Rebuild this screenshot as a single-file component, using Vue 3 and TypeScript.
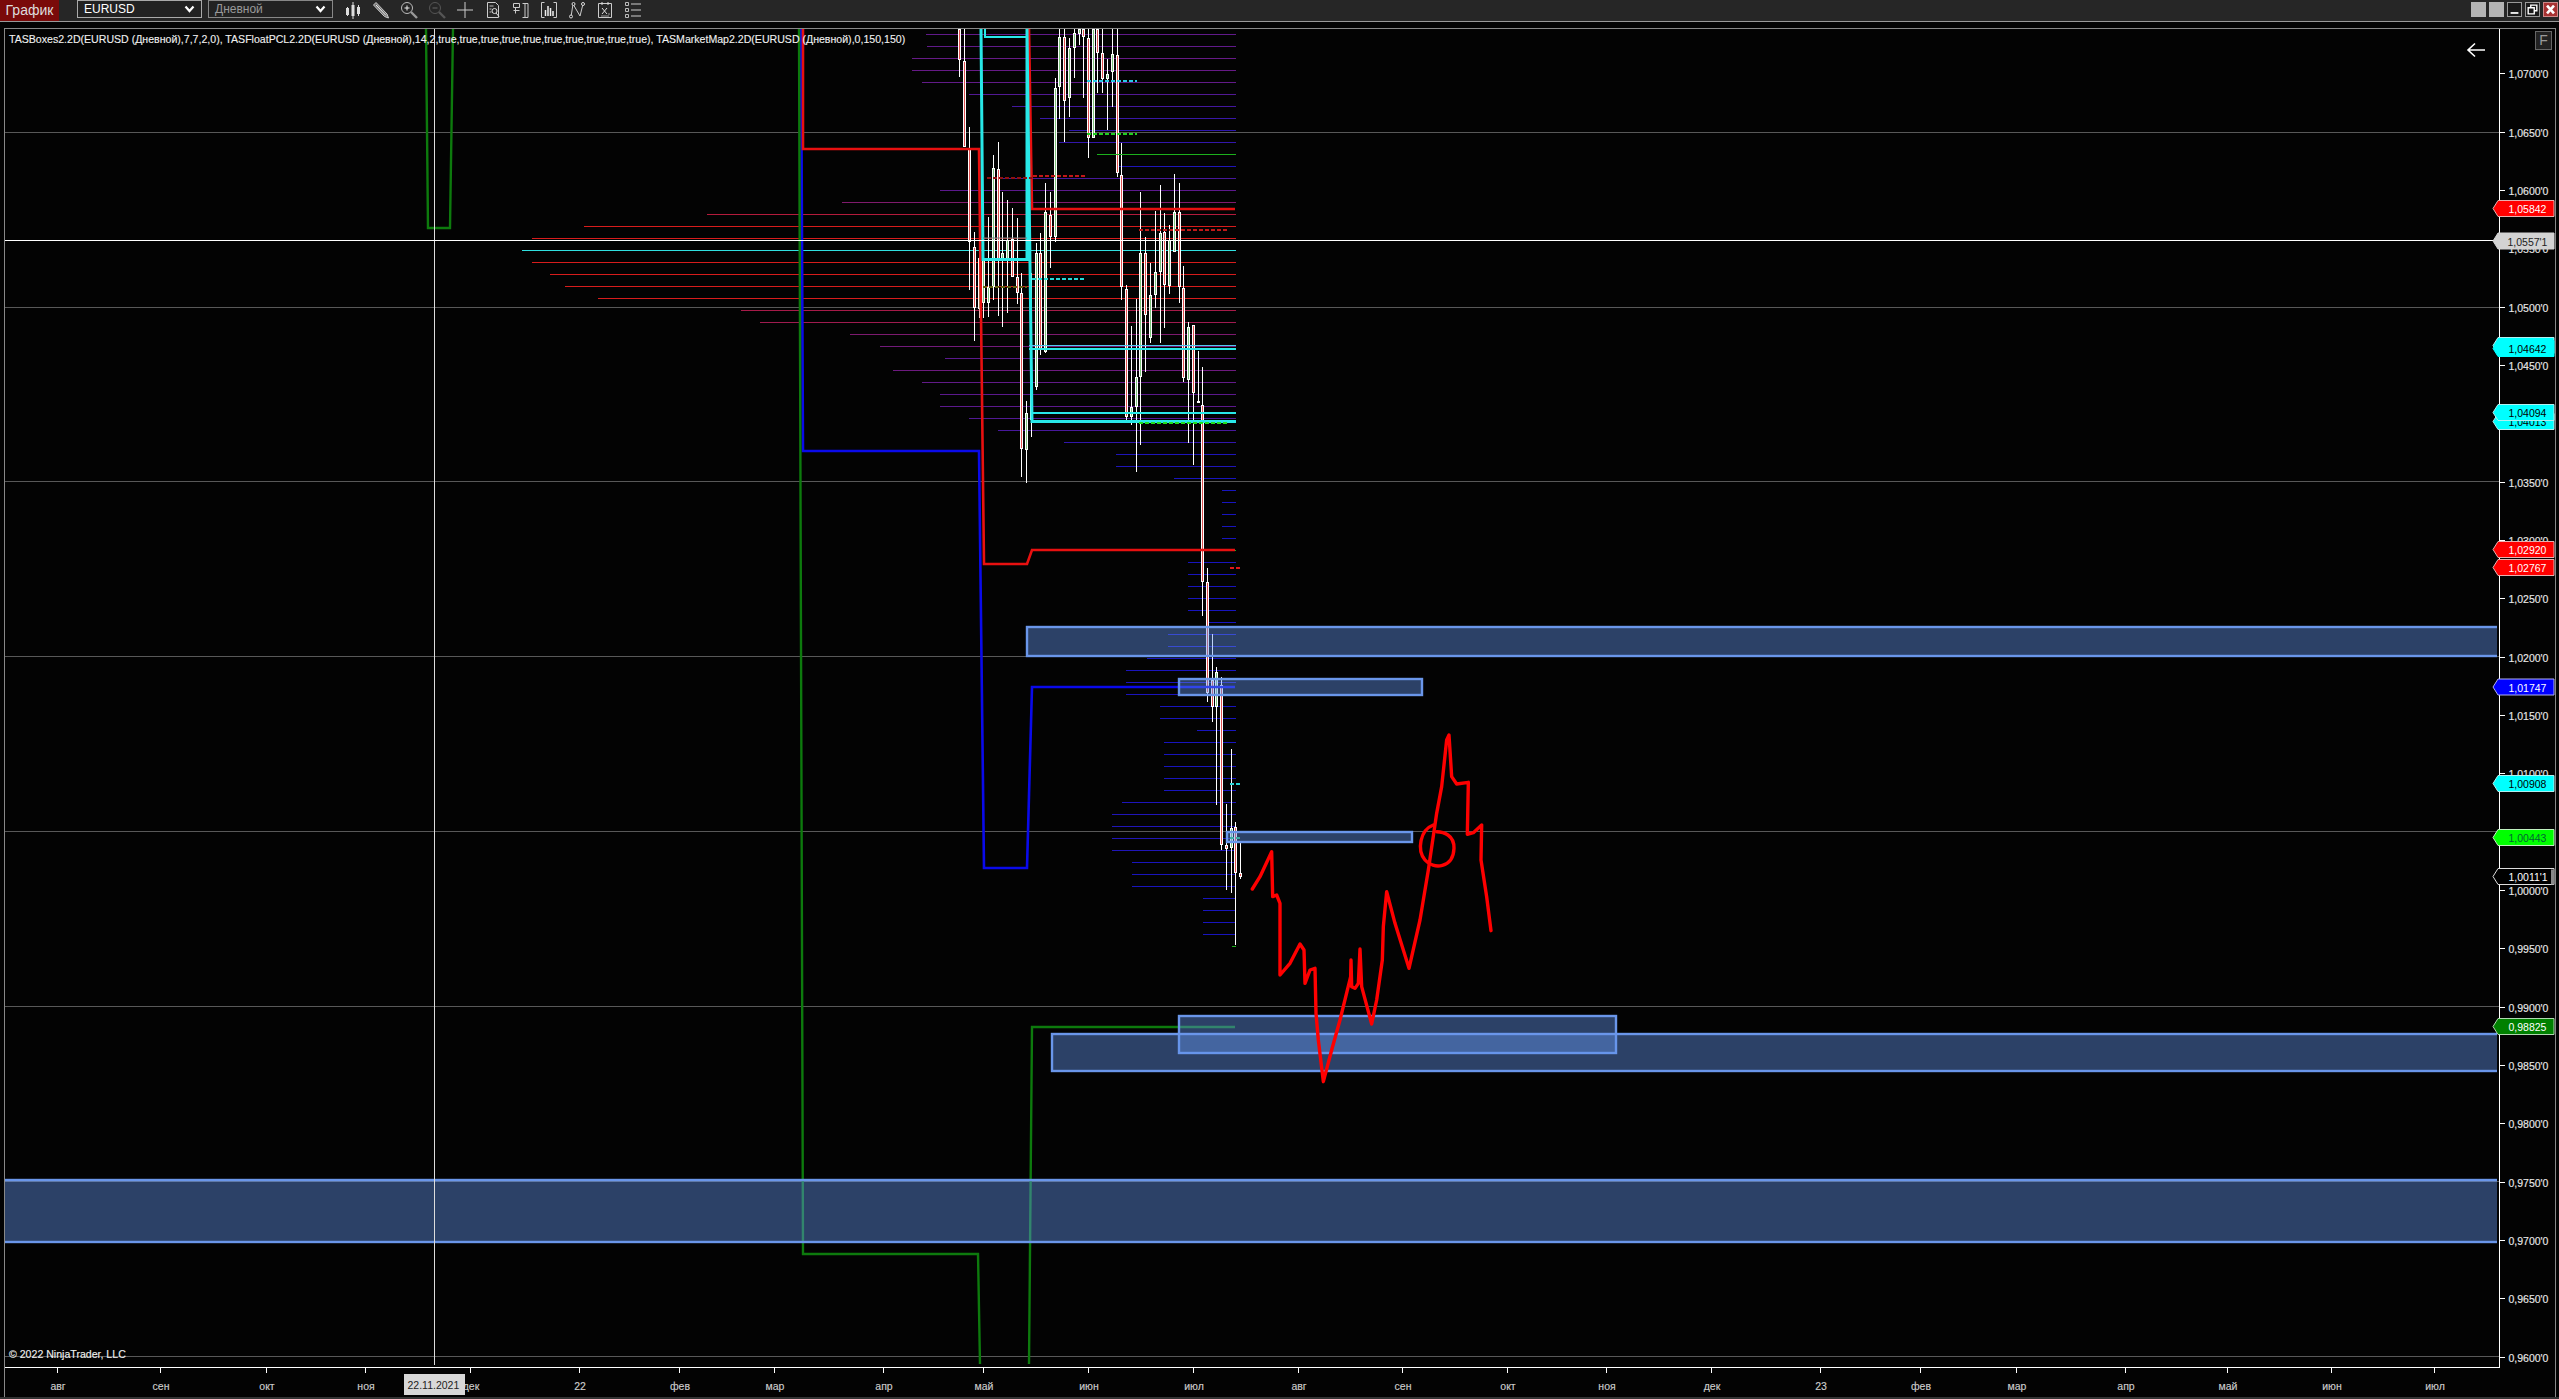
<template>
  <div class="app">
    <header class="toolbar">
      <div class="tab">График</div>
      <div class="select">
        <span>EURUSD</span>
        <svg width="11" height="8" viewBox="0 0 11 8"><path d="M1.5 1.5 5.5 6 9.5 1.5" fill="none" stroke="#fff" stroke-width="2.2" /></svg>
      </div>
      <div class="select select--dim">
        <span>Дневной</span>
        <svg width="11" height="8" viewBox="0 0 11 8"><path d="M1.5 1.5 5.5 6 9.5 1.5" fill="none" stroke="#fff" stroke-width="2.2" /></svg>
      </div>
      <div class="tools">
        <svg class="tool" viewBox="0 0 18 18"><path d="M3.5 6v9M9 1v17M14.5 4v11" stroke="#ddd" fill="none" /><rect x="2" y="7" width="3" height="7" fill="#ddd" /><rect x="7.5" y="4" width="3" height="11" fill="#ddd" /><rect x="13" y="6" width="3" height="7" fill="#ddd" /></svg>
        <svg class="tool" viewBox="0 0 18 18"><path d="M1.5 4 4 1.5 15 13l1.5 4-4-1.5z" fill="#777" stroke="#ccc" /><path d="M4 4 14 14.5" stroke="#eee" /></svg>
        <svg class="tool" viewBox="0 0 18 18"><circle cx="7" cy="7" r="5.5" fill="none" stroke="#bbb" /><path d="M4.5 7h5M7 4.5v5" stroke="#eee" /><path d="M11 11l6 6" stroke="#999" stroke-width="2.4" /></svg>
        <svg class="tool" viewBox="0 0 18 18"><circle cx="7" cy="7" r="5.5" fill="none" stroke="#555" /><path d="M4.5 7h5" stroke="#666" /><path d="M11 11l6 6" stroke="#555" stroke-width="2.4" /></svg>
        <svg class="tool" viewBox="0 0 18 18"><path d="M9 1v16M1 9h16" stroke="#ccc" /></svg>
        <svg class="tool" viewBox="0 0 18 18"><path d="M3.5 1.5h8l3 3v12h-11z" fill="none" stroke="#ccc" /><path d="M5.5 5h4M5.5 8h2M5.5 11h2" stroke="#bbb" /><circle cx="10.5" cy="10" r="2.5" fill="#222" stroke="#ddd" /><path d="M12 12l3 3.5" stroke="#ddd" /></svg>
        <svg class="tool" viewBox="0 0 18 18"><path d="M1.5 2.5h6v4h-6zM1.5 9.5h6M3.5 6.5v6M10.5 2.5H16v14h-5.5M13 2.5v14" fill="none" stroke="#ccc" /></svg>
        <svg class="tool" viewBox="0 0 18 18"><path d="M4.5 1.5h-3v15h3M13.5 1.5h3v15h-3" fill="none" stroke="#ccc" /><path d="M5.5 9v6M8 5v10M10.5 7v8M13 10v5" stroke="#eee" stroke-width="1.5" /></svg>
        <svg class="tool" viewBox="0 0 18 18"><path d="M3 16 5 3l7 12 3-12" fill="none" stroke="#ccc" /><circle cx="3" cy="15.5" r="1.5" fill="#222" stroke="#ddd" /><circle cx="5.5" cy="3" r="1.5" fill="#222" stroke="#ddd" /><circle cx="15" cy="3" r="1.5" fill="#222" stroke="#ddd" /></svg>
        <svg class="tool" viewBox="0 0 18 18"><path d="M2.5 2.5h13v14h-13z" fill="none" stroke="#ccc" /><path d="M6 1v3M12 1v3M6 7l5 6M11 7l-5 6" stroke="#ddd" /><path d="M12 13h2M5 15h8" stroke="#999" /></svg>
        <svg class="tool" viewBox="0 0 18 18"><path d="M1.5 1.5h3v3h-3zM1.5 7.5h3v3h-3zM1.5 13.5h3v3h-3z" fill="none" stroke="#bbb" /><path d="M7 3h10M7 9h10M7 15h10" stroke="#ccc" /></svg>
      </div>
      <div class="window-controls">
        <span class="win win--blank"></span>
        <span class="win win--blank"></span>
        <span class="win"><svg viewBox="0 0 15 15"><path d="M3 11.5h9" stroke="#fff" stroke-width="2" /></svg></span>
        <span class="win"><svg viewBox="0 0 15 15"><path d="M5.5 5V2.5h7V9H10M2.5 5.5h7v7h-7z" fill="none" stroke="#fff" stroke-width="1.6" /></svg></span>
        <span class="win win--close"><svg viewBox="0 0 15 15"><path d="M3.5 3 11.5 12M11.5 3 3.5 12" stroke="#fff" stroke-width="3" /></svg></span>
      </div>
    </header>

    <main class="frame">
      <svg class="chart" viewBox="5 29 2550 1368" width="2550" height="1368">
        <defs>
          <clipPath id="plot-clip"><rect x="5" y="29" width="2492" height="1338" /></clipPath>
        </defs>

        <!-- сетка -->
        <g class="crisp">
          <rect v-for="y in gridY" :key="y" x="5" :y="y" width="2494" height="1" fill="#585858" />
        </g>

        <!-- профиль объёма -->
        <g class="crisp">
          <rect
            v-for="row in profile"
            :key="row.y"
            :x="row.x"
            :y="row.y"
            :width="1236 - row.x"
            height="1"
            :fill="row.color"
          />
        </g>

        <!-- свечи -->
        <g class="crisp" clip-path="url(#plot-clip)">
          <g v-for="c in candles" :key="c.x">
            <rect :x="c.x" :y="c.wickTop" width="1" :height="c.wickBottom - c.wickTop" fill="#fff" />
            <rect :x="c.x - 1" :y="c.bodyTop" width="3" :height="Math.max(c.bodyBottom - c.bodyTop, 2)" fill="#fff" />
            <rect :x="c.x" :y="c.bodyTop + 1" width="1" :height="Math.max(c.bodyBottom - c.bodyTop - 2, 0)" :fill="c.up ? '#7fc47f' : '#e05050'" />
          </g>
        </g>

        <!-- уровни -->
        <g fill="none" stroke-linejoin="miter">
          <polyline v-for="(l, i) in levels" :key="i" :points="l.points" :stroke="l.color" :stroke-width="l.width" />
          <path
            v-for="(d, i) in dashes"
            :key="'d' + i"
            :d="`M${d.x1} ${d.y}H${d.x2}`"
            :stroke="d.color"
            stroke-width="2"
            stroke-dasharray="4 2"
          />
        </g>

        <!-- зоны -->
        <g clip-path="url(#plot-clip)">
          <rect
            v-for="(b, i) in boxes"
            :key="i"
            :x="b.x + 1"
            :y="b.y + 1"
            :width="b.w - 2"
            :height="b.h - 2"
            fill="rgba(100,149,237,0.43)"
            stroke="#6a96ea"
            stroke-width="2.4"
          />
        </g>

        <!-- перекрестие -->
        <g class="crisp">
          <rect x="434" y="29" width="1" height="1336" fill="#ddd" />
          <rect x="5" y="240" width="2494" height="1" fill="#fff" />
        </g>

        <!-- рисунок от руки -->
        <g fill="none" stroke="#f00" stroke-width="3.4" stroke-linejoin="round" stroke-linecap="round">
          <polyline :points="penLine" />
          <path d="M1433.3 825C1420 830 1416.7 850 1425 860C1433.3 870 1453.3 868.3 1454 848.3C1454.3 835 1443.3 831.7 1436.7 831.7" />
        </g>

        <!-- ось цены -->
        <g class="crisp">
          <rect x="2499" y="29" width="1" height="1339" fill="#fff" />
          <rect x="5" y="1367" width="2495" height="1" fill="#fff" />
          <rect v-for="t in priceTicks" :key="t.label" x="2499" :y="t.y" width="6" height="1" fill="#fff" />
          <rect v-for="t in timeTicks" :key="t.x" :x="t.x" y="1367" width="1" height="6" fill="#fff" />
        </g>
        <text v-for="t in priceTicks" :key="'p' + t.label" class="axis-text" x="2508.5" :y="t.y + 5">{{ t.label }}</text>
        <text v-for="t in timeTicks" :key="'t' + t.x" class="axis-text axis-text--time" :x="t.x + 1" y="1390">{{ t.label }}</text>

        <!-- метки цены -->
        <g v-for="f in flags" :key="f.label">
          <polygon :points="flagPoints(f.cy)" :fill="f.fill" :stroke="f.edge" stroke-width="1" />
          <rect v-if="f.bar" x="2551" :y="f.cy - 7" width="3" height="15" fill="#888" />
          <text class="flag-text" :x="f.x" :y="f.cy + 4.5" :fill="f.text">{{ f.label }}</text>
        </g>

        <!-- дата под перекрестием -->
        <rect x="404" y="1374" width="61" height="21" fill="#d8d8d8" />
        <text class="flag-text" x="407.5" y="1389" fill="#222">22.11.2021</text>

        <text class="legend" x="9" y="43">TASBoxes2.2D(EURUSD (Дневной),7,7,2,0), TASFloatPCL2.2D(EURUSD (Дневной),14,2,true,true,true,true,true,true,true,true,true,true), TASMarketMap2.2D(EURUSD (Дневной),0,150,150)</text>
        <text class="legend" x="9" y="1358">© 2022 NinjaTrader, LLC</text>

        <path d="M2485 50h-17M2475 43.5 2468 50l7 6.5" fill="none" stroke="#fff" stroke-width="1.6" />
      </svg>
      <div class="f-button">F</div>
    </main>
    <footer class="status"></footer>
  </div>
</template>

<script setup lang="ts">
interface Flag {
  label: string
  cy: number
  x: number
  fill: string
  text: string
  edge: string
  bar?: boolean
}

const gridY = [132, 307, 481, 656, 831, 1006, 1181, 1356]

// цена -> y
const priceY = (p: number) => Math.round(481.7 + ((1.035 - p) / 0.005) * 58.33)

const priceTicks = Array.from({ length: 23 }, (_, i) => {
  const p = 1.07 - i * 0.005
  return { y: priceY(p), label: p.toFixed(4).replace('.', ',') + "'0" }
})

const timeTicks = [
  [57, 'авг'], [160, 'сен'], [266, 'окт'], [365, 'ноя'], [470, 'дек'], [579, '22'],
  [679, 'фев'], [774, 'мар'], [883, 'апр'], [983, 'май'], [1088, 'июн'], [1193, 'июл'],
  [1298, 'авг'], [1402, 'сен'], [1507, 'окт'], [1606, 'ноя'], [1711, 'дек'], [1820, '23'],
  [1920, 'фев'], [2016, 'мар'], [2125, 'апр'], [2227, 'май'], [2331, 'июн'], [2434, 'июл']
].map(([x, label]) => ({ x: x as number, label: label as string }))

// начало каждой строки профиля, шаг 12px
const profileStarts = [
  926, 927, 912, 912, 922, 969, 1012, 1040, 1069, 1059, 1097, 1117, 1000, 940, 842, 707, 584, 532, 522,
  532, 550, 565, 598, 741, 760, 850, 880, 945, 893, 922, 940, 940, 969, 998, 1064, 1116, 1116, 1174,
  1222, 1222, 1222, 1222, 1222, 1222, 1188, 1188, 1188, 1188, 1188, 1208, 1168, 1168, 1147, 1126, 1126,
  1126, 1160, 1160, 1197, 1164, 1164, 1164, 1164, 1164, 1122, 1112, 1112, 1112, 1112, 1132, 1132, 1132,
  1203, 1203, 1203, 1203, 1232
]

const mix = (a: number[], b: number[], t: number) =>
  `rgb(${a.map((v, i) => Math.round(v + (b[i] - v) * t)).join(',')})`

const rowColor = (len: number) => {
  const blue = [24, 20, 190]
  const purple = [100, 26, 135]
  const red = [215, 28, 28]
  if (len < 100) return mix(blue, blue, 0)
  if (len < 320) return mix(blue, purple, (len - 100) / 220)
  return mix(purple, red, Math.min((len - 320) / 300, 1))
}

const profile = profileStarts.map((x, k) => {
  let color = rowColor(1236 - x)
  if (k === 18) color = '#30e0e0'
  if (k === 10 || k === 43 || k === 76) color = '#1cb01c'
  return { x, y: 34 + 12 * k, color }
})

// [x, верх тени, низ тени, верх тела, низ тела, рост] в координатах кропа
const upperCandles: [number, number, number, number, number, boolean][] = [
  [178, 26, 172, 26, 120, false], [193, 26, 380, 124, 380, false], [208, 322, 810, 385, 665, false],
  [222, 637, 962, 680, 865, false], [236, 537, 893, 715, 868, true], [250, 650, 895, 715, 848, true],
  [265, 590, 890, 800, 848, true], [280, 405, 840, 445, 800, true], [295, 367, 887, 448, 722, false],
  [307, 517, 922, 700, 720, true], [322, 540, 878, 660, 720, true], [337, 565, 770, 658, 770, false],
  [352, 595, 853, 770, 818, false], [364, 760, 1370, 820, 1288, false], [379, 1143, 1388, 1178, 1290, true],
  [394, 760, 1250, 1100, 1200, true], [409, 670, 1110, 700, 1100, true], [421, 640, 1005, 700, 990, false],
  [436, 490, 998, 575, 995, true], [451, 515, 745, 585, 652, false], [465, 175, 665, 203, 650, true],
  [478, 26, 298, 52, 200, true], [493, 26, 365, 52, 244, false], [508, 55, 292, 85, 235, true],
  [523, 26, 173, 40, 85, true], [536, 26, 75, 26, 42, true], [550, 26, 235, 26, 52, false],
  [565, 26, 415, 55, 355, false], [580, 26, 355, 26, 355, true], [592, 26, 218, 26, 98, false],
  [607, 26, 218, 100, 178, false], [622, 118, 330, 163, 178, true], [637, 26, 262, 103, 157, true],
  [650, 26, 472, 105, 460, false], [664, 370, 840, 465, 800, false], [679, 795, 1210, 808, 1190, false],
  [694, 918, 1215, 1160, 1190, true], [707, 838, 1355, 1070, 1160, true], [721, 515, 1275, 700, 1070, true],
  [736, 652, 1055, 700, 885, false], [751, 730, 970, 825, 955, true], [766, 573, 865, 755, 825, true],
  [779, 495, 968, 638, 755, true], [793, 580, 923, 637, 795, false], [808, 615, 822, 660, 797, true],
  [823, 463, 695, 575, 695, true], [836, 490, 850, 575, 800, false], [850, 738, 1085, 805, 1075, false],
  [865, 905, 1270, 920, 1080, true], [880, 915, 1335, 916, 1118, false], [893, 993, 1150, 1142, 1150, false],
  [907, 1042, 1787, 1155, 1685, false]
]

const lowerCandles: [number, number, number, number, number, boolean][] = [
  [322, 265, 665, 305, 640, false], [337, 462, 725, 600, 682, false], [349, 562, 975, 575, 682, true],
  [364, 590, 1110, 615, 1095, false], [379, 972, 1230, 1095, 1108, false], [394, 807, 1238, 1045, 1105, true],
  [406, 1027, 1395, 1040, 1180, false], [421, 1090, 1198, 1178, 1190, false]
]

const toCandle = (ox: number, oy: number) => (c: [number, number, number, number, number, boolean]) => ({
  x: Math.round(ox + c[0] / 3),
  wickTop: Math.round(oy + c[1] / 3),
  wickBottom: Math.round(oy + c[2] / 3),
  bodyTop: Math.round(oy + c[3] / 3),
  bodyBottom: Math.round(oy + c[4] / 3),
  up: c[5]
})

const candles = [...upperCandles.map(toCandle(900, 20)), ...lowerCandles.map(toCandle(1100, 480))]

const levels = [
  { color: '#0d7a0d', width: 2.4, points: '426,29 428,228 450,228 453,29' },
  { color: '#0a0aea', width: 2.6, points: '801,29 803,451 979,451 984,868 1027,868 1032,687 1235,687' },
  { color: '#0d7a0d', width: 2.4, points: '799,29 803,1254 978,1254 980,1364' },
  { color: '#0d7a0d', width: 2.4, points: '1029,1364 1032,1027 1235,1027' },
  { color: '#e81010', width: 2.6, points: '803,29 803,149 979,149 984,564 1027,564 1032,550 1235,550' },
  { color: '#e81010', width: 2.6, points: '1029,29 1032,209 1235,209' },
  { color: '#28e8e8', width: 3, points: '981,29 983,259.5 1027,259.5 1027,29 1032,421.5 1236,421.5' },
  { color: '#28e8e8', width: 2, points: '985,29 985,37 1027,37' },
  { color: '#28e8e8', width: 2, points: '1029,349 1236,349' },
  { color: '#50c8f0', width: 1, points: '1029,345.5 1236,345.5' },
  { color: '#28e8e8', width: 2, points: '1032,413 1236,413' },
  { color: '#708080', width: 1, points: '983,238 1027,238' },
  { color: '#1cb01c', width: 1, points: '1097,154.5 1235,154.5' }
]

const dashes = [
  { x1: 1087, x2: 1137, y: 81, color: '#28c8e8' },
  { x1: 1087, x2: 1137, y: 134, color: '#20d020' },
  { x1: 987, x2: 1032, y: 178, color: '#901010' },
  { x1: 1033, x2: 1085, y: 176, color: '#c01818' },
  { x1: 1139, x2: 1228, y: 230, color: '#c01818' },
  { x1: 1032, x2: 1085, y: 279, color: '#28d8d8' },
  { x1: 983, x2: 1027, y: 287, color: '#606010' },
  { x1: 1139, x2: 1228, y: 423, color: '#20e020' },
  { x1: 1230, x2: 1242, y: 568, color: '#e01818' },
  { x1: 1230, x2: 1242, y: 784, color: '#28d8d8' },
  { x1: 1230, x2: 1242, y: 838, color: '#20c070' }
]

// зоны, у которых край обрезан панелью, заходят за клип
const boxes = [
  { x: 1026, y: 626, w: 1500, h: 31 },
  { x: 1178, y: 678, w: 245, h: 18 },
  { x: 1226, y: 831, w: 187, h: 12 },
  { x: 1178, y: 1015, w: 439, h: 39 },
  { x: 1051, y: 1033, w: 1500, h: 39 },
  { x: -10, y: 1179, w: 2550, h: 64 }
]

const penLine = [
  [97, 507], [120, 470], [155, 395], [158, 530], [170, 525], [180, 550], [180, 765], [210, 730], [240, 672],
  [252, 690], [255, 790], [270, 750], [285, 745], [288, 880], [295, 960], [310, 1085], [335, 990], [360, 900],
  [392, 770], [393, 720], [395, 800], [405, 805], [415, 790], [420, 687], [425, 800], [455, 912], [470, 840],
  [487, 720], [490, 620], [500, 515], [525, 610], [567, 745], [600, 600], [625, 450], [650, 280], [665, 200],
  [680, 60], [687, 45], [695, 170], [710, 192], [745, 187], [742, 343], [760, 338], [785, 315], [783, 420],
  [800, 530], [813, 632]
].map(([x, y]) => `${1220 + x / 3},${720 + y / 3}`).join(' ')

const flag = (label: string, cy: number, fill: string, text: string, edge: string, bar = false): Flag => ({
  label,
  cy,
  x: 2508.5,
  fill,
  text,
  edge,
  bar
})

const flags: Flag[] = [
  flag('1,05842', 208.5, '#ff0000', '#fff', '#e8b0b0'),
  { ...flag("1,0557'1", 241, '#d3d3d3', '#222', '#d3d3d3'), x: 2507.5 },
  flag('1,04682', 345.5, '#00ffff', '#000', '#b0f0f0'),
  flag('1,04642', 348.5, '#00ffff', '#000', '#00ffff'),
  flag('1,04013', 421.5, '#00ffff', '#000', '#b0f0f0'),
  flag('1,04094', 412.5, '#00ffff', '#000', '#b0f0f0'),
  flag('1,02920', 549.5, '#ff0000', '#fff', '#e8b0b0'),
  flag('1,02767', 567.5, '#ff0000', '#fff', '#e8b0b0'),
  flag('1,01747', 687, '#0000ff', '#fff', '#b0b0f0'),
  flag('1,00908', 783.5, '#00ffff', '#000', '#b0f0f0'),
  flag('1,00443', 837.5, '#00ff00', '#063', '#c0f0c0'),
  flag("1,0011'1", 876.5, '#000', '#fff', '#ddd', true),
  flag('0,98825', 1026.5, '#008000', '#fff', '#b0d8b0')
]

const flagPoints = (cy: number) =>
  `2498,${cy - 8} 2554,${cy - 8} 2554,${cy + 8} 2498,${cy + 8} 2493,${cy}`
</script>

<style scoped>
.app {
  width: 2559px;
  height: 1399px;
  display: flex;
  flex-direction: column;
  background: #030303;
  overflow: hidden;
  font-family: "Liberation Sans", Arial, sans-serif;
}

.toolbar {
  height: 21px;
  display: flex;
  align-items: flex-start;
  background: #262626;
  border-bottom: 1px solid #999;
  flex-shrink: 0;
}

.tab {
  width: 59px;
  height: 21px;
  line-height: 21px;
  text-align: center;
  font-size: 14px;
  color: #ddd;
  background: #7a0a0a;
}

.select {
  width: 125px;
  height: 18px;
  margin: 0 0 0 6px;
  box-sizing: border-box;
  padding: 0 6px;
  display: flex;
  align-items: center;
  justify-content: space-between;
  font-size: 12px;
  color: #fff;
  background: #222;
  border: 1px solid #aaa;
}

.tab + .select {
  margin-left: 18px;
}

.select--dim {
  color: #999;
  border-color: #888;
}

.tools {
  display: flex;
  gap: 10px;
  margin: 1px 0 0 11px;
}

.tool {
  width: 18px;
  height: 18px;
}

.window-controls {
  display: flex;
  gap: 3px;
  margin: 2px 1px 0 auto;
}

.win {
  width: 15px;
  height: 15px;
  display: block;
  background: #1a1a1a;
  border: 1px solid #999;
  box-sizing: border-box;
}

.win svg {
  display: block;
  width: 100%;
  height: 100%;
}

.win--blank {
  background: #b4b4b4;
  border-color: #b4b4b4;
}

.win--close {
  background: #a83232;
  border-color: #c88;
}

.frame {
  position: relative;
  flex: 1;
  min-height: 0;
  margin: 6px 3px 0 4px;
  border: 1px solid #888;
  border-bottom: 0;
}

.chart {
  display: block;
}

.crisp {
  shape-rendering: crispEdges;
}

.axis-text {
  font-size: 10.5px;
  fill: #e8e8e8;
  stroke: #e8e8e8;
  stroke-width: 0.15px;
}

.axis-text--time {
  text-anchor: middle;
  fill: #ccc;
  stroke: #ccc;
}

.flag-text {
  font-size: 10.5px;
}

.legend {
  font-size: 10.58px;
  fill: #f0f0f0;
  stroke: #f0f0f0;
  stroke-width: 0.12px;
}

.f-button {
  position: absolute;
  top: 2px;
  right: 3px;
  width: 17px;
  height: 19px;
  box-sizing: border-box;
  border: 1px solid #666;
  background: #222;
  color: #999;
  font-size: 14px;
  line-height: 17px;
  text-align: center;
}

.status {
  height: 2px;
  background: #333;
  flex-shrink: 0;
}
</style>
